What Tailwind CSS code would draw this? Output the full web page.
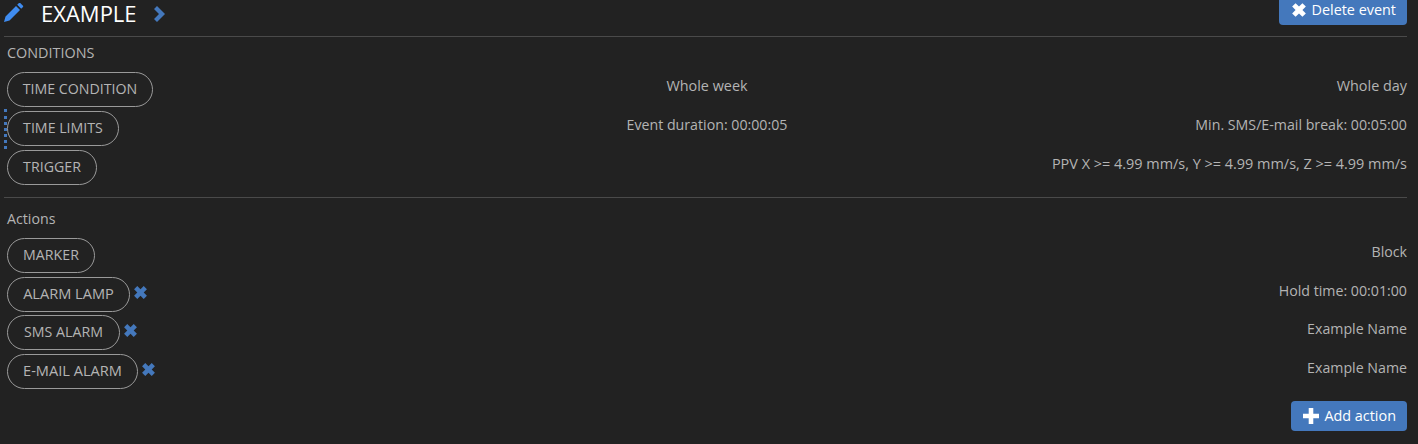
<!DOCTYPE html>
<html lang="en">
<head>
    <meta charset="UTF-8">
    <script src="https://cdn.jsdelivr.net/npm/@tailwindcss/browser@4"></script>
    <title>Event</title>
</head>
<body class="bg-[#222222] h-[444px] overflow-hidden font-['Open_Sans',sans-serif] text-[14.2px] text-[#b4b4b4]">
    <div class="pl-[4px] pr-[11px]">
        <!-- header -->
        <div class="flex justify-between h-[37px] border-b border-[#4a4a4a]">
            <div class="flex items-center h-[26px]">
                <svg class="w-[20px] h-[20px]" viewBox="0 0 20 20"><path fill="#3f8cf0" d="M0 19 L1.5 13.5 L12 3 L16 7 L5.5 17.5 Z M13.2 1.8 L15 0 Q15.6 -.4 16.2 0 L19 2.8 Q19.4 3.4 19 4 L17.2 5.8 Z"/></svg>
                <span class="ml-[17px] text-[22px] text-white">EXAMPLE</span>
                <svg class="w-[14px] h-[16px] ml-[16px] mt-[1px]" viewBox="0 0 14 16"><path fill="#4478bc" d="M1 3 L4 0 L12 8 L4 16 L1 13 L6 8 Z"/></svg>
            </div>
            <button class="flex items-center h-[25px] pb-[6px] pl-[12px] pr-[11px] bg-[#4478bc] rounded-b-[4px] text-white text-[14.4px]">
                <svg class="w-[16px] h-[16px] mr-[5px]" viewBox="0 0 14 14"><path fill="#fff" d="M1 4 L4 1 L7 4 L10 1 L13 4 L10 7 L13 10 L10 13 L7 10 L4 13 L1 10 L4 7 Z"/></svg>
                Delete event
            </button>
        </div>

        <!-- conditions -->
        <div class="pl-[3px] pt-[6px] h-[161px] border-b border-[#4a4a4a]">
            <div class="h-[29px] leading-[20px] text-[14.4px]">CONDITIONS</div>
            <div class="relative">
                <div class="flex flex-col gap-[4px]">
                    <div class="grid grid-cols-3 items-start h-[35px]">
                        <span class="justify-self-start w-[146px] h-[35px] text-center leading-[31px] border border-[#9a9a9a] rounded-full">TIME CONDITION</span>
                        <span class="text-center leading-[28px] text-[14.4px]">Whole week</span>
                        <span class="text-right leading-[28px] text-[14.4px]">Whole day</span>
                    </div>
                    <div class="grid grid-cols-3 items-start h-[35px]">
                        <span class="justify-self-start w-[112px] h-[35px] text-center leading-[31px] border border-[#9a9a9a] rounded-full">TIME LIMITS</span>
                        <span class="text-center leading-[28px]">Event duration: 00:00:05</span>
                        <span class="text-right leading-[28px]">Min. SMS/E-mail break: 00:05:00</span>
                    </div>
                    <div class="flex justify-between items-start h-[35px]">
                        <span class="w-[90px] h-[35px] text-center leading-[31px] border border-[#9a9a9a] rounded-full">TRIGGER</span>
                        <span class="leading-[28px] text-[14.45px]">PPV X &gt;= 4.99 mm/s, Y &gt;= 4.99 mm/s, Z &gt;= 4.99 mm/s</span>
                    </div>
                </div>
                <div class="absolute left-[-3px] top-[37px] h-[40px] border-l-[3px] border-dotted border-[#4478bc]"></div>
            </div>
        </div>

        <!-- actions -->
        <div class="pl-[3px] pt-[11px]">
            <div class="h-[29px] leading-[20px]">Actions</div>
            <div class="flex flex-col gap-[3.6px]">
                <div class="flex justify-between items-start h-[35px]">
                    <span class="w-[88px] h-[35px] text-center leading-[31px] border border-[#9a9a9a] rounded-full">MARKER</span>
                    <span class="leading-[28px]">Block</span>
                </div>
                <div class="flex items-start h-[35px]">
                    <span class="w-[123px] h-[35px] text-center leading-[31px] border border-[#9a9a9a] rounded-full text-[14.6px]">ALARM LAMP</span>
                    <svg class="w-[15px] h-[15px] ml-[3px] mt-[8px]" viewBox="0 0 14 14"><path fill="#4478bc" d="M1 4 L4 1 L7 4 L10 1 L13 4 L10 7 L13 10 L10 13 L7 10 L4 13 L1 10 L4 7 Z"/></svg>
                    <span class="ml-auto leading-[28px]">Hold time: 00:01:00</span>
                </div>
                <div class="flex items-start h-[35px]">
                    <span class="w-[113px] h-[35px] text-center leading-[31px] border border-[#9a9a9a] rounded-full">SMS ALARM</span>
                    <svg class="w-[15px] h-[15px] ml-[3px] mt-[8px]" viewBox="0 0 14 14"><path fill="#4478bc" d="M1 4 L4 1 L7 4 L10 1 L13 4 L10 7 L13 10 L10 13 L7 10 L4 13 L1 10 L4 7 Z"/></svg>
                    <span class="ml-auto leading-[28px]">Example Name</span>
                </div>
                <div class="flex items-start h-[35px]">
                    <span class="w-[131px] h-[35px] text-center leading-[31px] border border-[#9a9a9a] rounded-full text-[14.6px]">E-MAIL ALARM</span>
                    <svg class="w-[15px] h-[15px] ml-[3px] mt-[8px]" viewBox="0 0 14 14"><path fill="#4478bc" d="M1 4 L4 1 L7 4 L10 1 L13 4 L10 7 L13 10 L10 13 L7 10 L4 13 L1 10 L4 7 Z"/></svg>
                    <span class="ml-auto leading-[28px]">Example Name</span>
                </div>
            </div>
            <div class="flex justify-end mt-[12px]">
                <button class="flex items-center h-[30px] pl-[12px] pr-[11px] bg-[#4478bc] rounded-[4px] text-white text-[14.4px]">
                    <svg class="w-[16px] h-[16px] mr-[5px]" viewBox="0 0 14 14"><path fill="#fff" d="M5 0 H9 V5 H14 V9 H9 V14 H5 V9 H0 V5 H5 Z"/></svg>
                    Add action
                </button>
            </div>
        </div>
    </div>
</body>
</html>
